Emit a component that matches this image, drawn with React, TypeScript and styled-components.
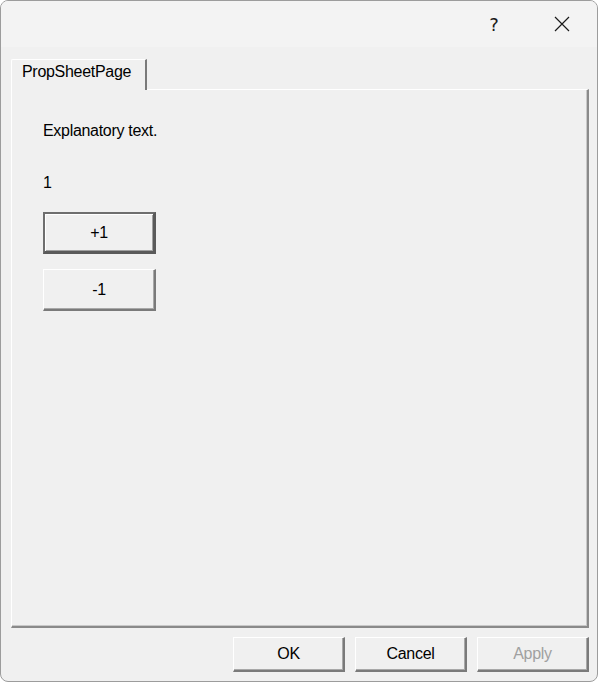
import React, { useState } from "react";
import styled, { createGlobalStyle } from "styled-components";

const Global = createGlobalStyle`
  html, body { margin: 0; padding: 0; background: #ffffff; }
  body { font-family: "Liberation Sans", Arial, sans-serif; }
  * { box-sizing: border-box; }
`;

const Window = styled.div`
  width: 598px;
  height: 682px;
  border: 1px solid #9c9c9c;
  border-radius: 8px;
  background: #f0f0f0;
  display: flex;
  flex-direction: column;
  overflow: hidden;
`;

const TitleBar = styled.div`
  height: 46px;
  flex: none;
  background: #f3f3f3;
  display: flex;
  justify-content: flex-end;
  align-items: center;
  padding-right: 12px;
`;

const CaptionButton = styled.div`
  width: 46px;
  height: 46px;
  display: flex;
  align-items: center;
  justify-content: center;
  color: #1a1a1a;
  font-family: "DejaVu Sans", sans-serif;
  font-size: 18px;
  font-weight: 400;
`;

const HelpButton = styled(CaptionButton)`
  margin-right: 22px;
  padding-top: 1px;
`;

const Body = styled.div`
  flex: 1;
  display: flex;
  flex-direction: column;
  padding: 12px 8px 9px 10px;
`;

const TabStrip = styled.div`
  display: flex;
  height: 30px;
  flex: none;
`;

const Tab = styled.div`
  width: 136px;
  height: 31px;
  border-top: 1px solid #ffffff;
  border-left: 1px solid #ffffff;
  border-right: 2px solid #7a7a7a;
  border-top-left-radius: 2px;
  background: #f0f0f0;
  font-size: 16px;
  letter-spacing: -0.3px;
  color: #000;
  padding: 3px 0 0 10px;
  position: relative;
  z-index: 1;
`;

const Panel = styled.div`
  flex: none;
  height: 539px;
  border-top: 1px solid #ffffff;
  border-left: 1px solid #ffffff;
  border-right: 2px solid #8a8a8a;
  border-bottom: 2px solid #8a8a8a;
  box-shadow: inset -1px -1px 0 #c8c8c8;
  padding: 30px 0 0 31px;
  display: flex;
  flex-direction: column;
  align-items: flex-start;
`;

const Label = styled.div`
  font-size: 16px;
  letter-spacing: -0.3px;
  color: #000;
  line-height: 22px;
`;

const Counter = styled(Label)`
  margin-top: 30px;
`;

const ClassicButton = styled.button<{ $default?: boolean; $disabled?: boolean }>`
  font-family: "Liberation Sans", Arial, sans-serif;
  font-size: 16px;
  letter-spacing: -0.3px;
  background: #f0f0f0;
  color: ${(p) => (p.$disabled ? "#a0a0a0" : "#000")};
  border-style: solid;
  border-width: ${(p) => (p.$default ? "2px 3px 3px 2px" : "1px 2px 2px 1px")};
  border-color: ${(p) =>
    p.$default ? "#6e6e6e #5a5a5a #5a5a5a #6e6e6e" : "#ffffff #7a7a7a #7a7a7a #ffffff"};
  box-shadow: ${(p) =>
    p.$default ? "inset 1px 1px 0 #ffffff, inset -1px -1px 0 #a0a0a0" : "inset -1px -1px 0 #a8a8a8"};
  padding: 0;
  cursor: default;
`;

const PageButton = styled(ClassicButton)`
  width: 113px;
  height: 42px;
`;

const FirstButton = styled(PageButton)`
  margin-top: 18px;
`;

const SecondButton = styled(PageButton)`
  margin-top: 15px;
`;

const Footer = styled.div`
  display: flex;
  justify-content: flex-end;
  gap: 10px;
  padding-top: 9px;
`;

const DialogButton = styled(ClassicButton)`
  width: 112px;
  height: 35px;
`;

export default function App() {
  const [count, setCount] = useState(1);
  return (
    <>
      <Global />
      <Window>
        <TitleBar>
          <HelpButton>?</HelpButton>
          <CaptionButton>
            <svg width="16" height="16" viewBox="0 0 16 16">
              <path d="M1 1 L15 15 M15 1 L1 15" stroke="#1a1a1a" strokeWidth="1.2" fill="none" />
            </svg>
          </CaptionButton>
        </TitleBar>
        <Body>
          <TabStrip>
            <Tab>PropSheetPage</Tab>
          </TabStrip>
          <Panel>
            <Label>Explanatory text.</Label>
            <Counter>{count}</Counter>
            <FirstButton $default onClick={() => setCount(count + 1)}>+1</FirstButton>
            <SecondButton onClick={() => setCount(count - 1)}>-1</SecondButton>
          </Panel>
          <Footer>
            <DialogButton>OK</DialogButton>
            <DialogButton>Cancel</DialogButton>
            <DialogButton $disabled>Apply</DialogButton>
          </Footer>
        </Body>
      </Window>
    </>
  );
}
